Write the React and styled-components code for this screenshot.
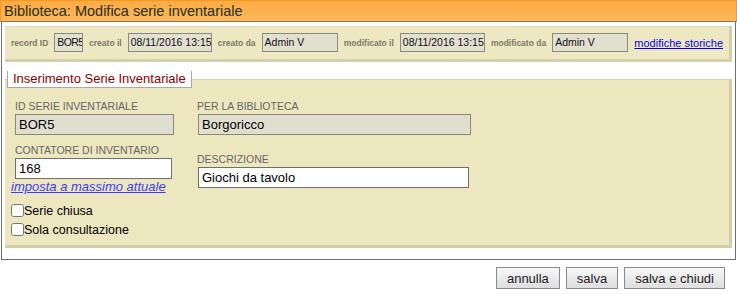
import React from 'react'
import styled, { createGlobalStyle } from 'styled-components'

const GlobalStyle = createGlobalStyle`
  body {
    margin: 0;
    background: #fff;
    font-family: "Liberation Sans", Arial, sans-serif;
  }
`

const Dialog = styled.div`
  width: 737px;
`

const TitleBar = styled.div`
  height: 20px;
  line-height: 21px;
  padding-left: 3px;
  border: 1px solid #f39a22;
  border-bottom-color: #8c7654;
  background: linear-gradient(#fbab44, #fdb75b);
  color: #1f301f;
  font-size: 14.5px;
  white-space: nowrap;
`

const Body = styled.div`
  margin: 0 1px;
  padding: 4px 3px 11px 3px;
  border: 1px solid #6e6e6e;
  border-top: none;
`

const InfoStrip = styled.div`
  display: flex;
  align-items: center;
  gap: 6px;
  padding: 6px 6px 7px;
  background: #eee8c2;
  border-top: 1px solid #ddd8b6;
  border-right: 3px solid #d5d0aa;
  border-bottom: 3px solid #d5d0aa;
`

const MetaLabel = styled.span`
  font-size: 8.5px;
  font-weight: bold;
  color: #7a7a68;
  white-space: nowrap;
`

const MetaValue = styled.div`
  box-sizing: border-box;
  width: ${p => p.$w}px;
  height: 19px;
  padding: 0 1px 0 2px;
  border: 1px solid #8b8b7b;
  background: #e2e0d0;
  font-size: 10.5px;
  line-height: 17px;
  letter-spacing: ${p => (p.$tight ? '-0.6px' : '0')};
  color: #111;
  white-space: nowrap;
  overflow: hidden;
`

const HistoryLink = styled.a`
  font-size: 11px;
  color: #0000ee;
  text-decoration: underline;
  white-space: nowrap;
`

const Panel = styled.fieldset`
  margin: 9px 0 0;
  padding: 0;
  min-width: 0;
  border: none;
  border-top: 1px solid #d8d2aa;
  border-right: 3px solid #d3cea6;
  border-bottom: 3px solid #d3cea6;
  background: #ede7c0;
`

const Legend = styled.legend`
  margin-left: 2px;
  padding: 0 5px;
  line-height: 16px;
  border: 1px solid #a8a8a8;
  border-top: none;
  background: #fff;
  color: #8b0000;
  font-size: 13px;
`

const Columns = styled.div`
  display: flex;
  padding: 12px 6px 6px 6px;
`

const Column = styled.div`
  display: flex;
  flex-direction: column;
  width: ${p => (p.$w ? `${p.$w}px` : 'auto')};
  flex: ${p => (p.$w ? 'none' : '1')};
`

const Field = styled.div`
  display: flex;
  flex-direction: column;
  align-items: flex-start;
  margin-top: ${p => p.$top || 0}px;
  padding-left: ${p => p.$indent}px;
`

const FieldLabel = styled.label`
  font-size: 10.5px;
  line-height: 13px;
  color: #666;
  white-space: nowrap;
`

const TextInput = styled.input`
  box-sizing: border-box;
  width: ${p => p.$w}px;
  height: 21px;
  margin: 1px 0 0 ${p => p.$shift || 0}px;
  padding: 0 3px;
  border: 1px solid ${p => (p.readOnly ? '#8d8a73' : '#6f6f6f')};
  background: ${p => (p.readOnly ? '#e0dfcf' : '#fff')};
  font-family: "Liberation Sans", Arial, sans-serif;
  font-size: 13px;
  color: #000;
  outline: none;
`

const ActionLink = styled.a`
  font-size: 13px;
  line-height: 15px;
  font-style: italic;
  color: #3a3aff;
  text-decoration: underline;
  white-space: nowrap;
`

const Checks = styled.div`
  margin-top: 7px;
`

const CheckRow = styled.label`
  display: flex;
  align-items: center;
  height: 19px;
  font-size: 12.5px;
  color: #000;
  white-space: nowrap;

  input {
    width: 13px;
    height: 13px;
    margin: 0;
  }
`

const ButtonBar = styled.div`
  display: flex;
  justify-content: flex-end;
  gap: 6px;
  margin-top: 7px;
  padding-right: 12px;
`

const Button = styled.button`
  height: 22px;
  padding: 0 10px;
  border: 1px solid #8a8a8a;
  background: linear-gradient(#f7f7f7, #dedede);
  font-family: "Liberation Sans", Arial, sans-serif;
  font-size: 13px;
  color: #222;
`

const meta = [
  { label: 'record ID', value: 'BOR5', w: 29, tight: true },
  { label: 'creato il', value: '08/11/2016 13:15', w: 85 },
  { label: 'creato da', value: 'Admin V', w: 77 },
  { label: 'modificato il', value: '08/11/2016 13:15', w: 86 },
  { label: 'modificato da', value: 'Admin V', w: 77 },
]

const App = () => (
  <Dialog>
    <GlobalStyle />
    <TitleBar>Biblioteca: Modifica serie inventariale</TitleBar>
    <Body>
      <InfoStrip>
        {meta.map(m => (
          <React.Fragment key={m.label}>
            <MetaLabel>{m.label}</MetaLabel>
            <MetaValue $w={m.w} $tight={m.tight}>{m.value}</MetaValue>
          </React.Fragment>
        ))}
        <HistoryLink href="#">modifiche storiche</HistoryLink>
      </InfoStrip>

      <Panel>
        <Legend>Inserimento Serie Inventariale</Legend>
        <Columns>
          <Column $w={186}>
            <Field $indent={4}>
              <FieldLabel>ID SERIE INVENTARIALE</FieldLabel>
              <TextInput $w={159} readOnly defaultValue="BOR5" />
            </Field>
            <Field $indent={4} $top={9}>
              <FieldLabel>CONTATORE DI INVENTARIO</FieldLabel>
              <TextInput $w={157} defaultValue="168" />
            </Field>
            <ActionLink href="#">imposta a massimo attuale</ActionLink>
            <Checks>
              <CheckRow><input type="checkbox" />Serie chiusa</CheckRow>
              <CheckRow><input type="checkbox" />Sola consultazione</CheckRow>
            </Checks>
          </Column>
          <Column>
            <Field $indent={0}>
              <FieldLabel>PER LA BIBLIOTECA</FieldLabel>
              <TextInput $w={273} $shift={1} readOnly defaultValue="Borgoricco" />
            </Field>
            <Field $indent={0} $top={18}>
              <FieldLabel>DESCRIZIONE</FieldLabel>
              <TextInput $w={271} $shift={1} defaultValue="Giochi da tavolo" />
            </Field>
          </Column>
        </Columns>
      </Panel>
    </Body>
    <ButtonBar>
      <Button>annulla</Button>
      <Button>salva</Button>
      <Button>salva e chiudi</Button>
    </ButtonBar>
  </Dialog>
)

export default App
